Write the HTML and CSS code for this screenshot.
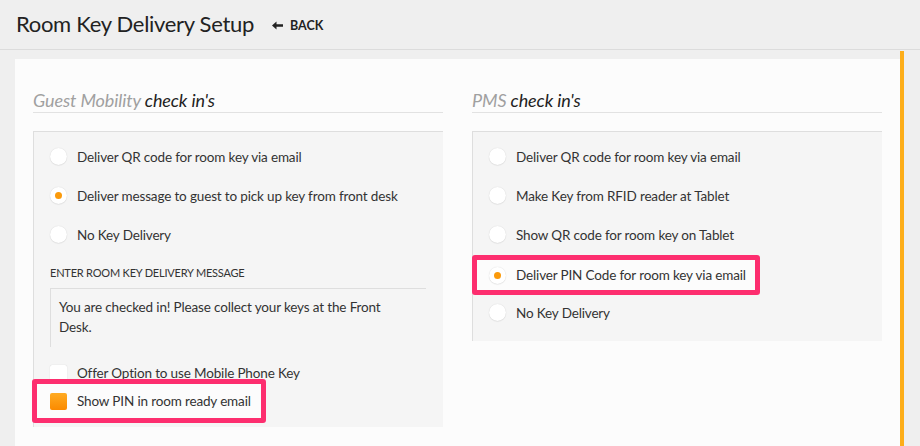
FILE: index.html
```html
<!DOCTYPE html>
<html>
<head>
<meta charset="utf-8">
<link rel="stylesheet" href="styles.css">
</head>
<body>
<header class="topbar">
  <h1 class="page-title">Room Key Delivery Setup</h1>
  <a class="back-link" href="#"><svg class="back-arrow" width="11" height="9" viewBox="0 0 11 9"><path d="M0 4.5 L4.5 0.5 L4.5 3.3 L11 3.3 L11 5.7 L4.5 5.7 L4.5 8.5 Z" fill="#222"/></svg>BACK</a>
</header>
<div class="main">
  <section class="panel">
    <div class="column">
      <h2 class="section-title"><span class="muted">Guest Mobility</span> check in's</h2>
      <div class="option-box box-left">
        <div class="row"><span class="radio"></span><span class="label">Deliver QR code for room key via email</span></div>
        <div class="row"><span class="radio checked"></span><span class="label">Deliver message to guest to pick up key from front desk</span></div>
        <div class="row"><span class="radio"></span><span class="label">No Key Delivery</span></div>
        <div class="field-label">ENTER ROOM KEY DELIVERY MESSAGE</div>
        <div class="message">You are checked in! Please collect your keys at the Front Desk.</div>
        <div class="check-row"><span class="checkbox"></span><span class="label">Offer Option to use Mobile Phone Key</span></div>
        <div class="check-row highlight hl-check"><span class="checkbox checked"></span><span class="label">Show PIN in room ready email</span></div>
      </div>
    </div>
    <div class="column">
      <h2 class="section-title"><span class="muted">PMS</span> check in's</h2>
      <div class="option-box box-right">
        <div class="row"><span class="radio"></span><span class="label">Deliver QR code for room key via email</span></div>
        <div class="row"><span class="radio"></span><span class="label">Make Key from RFID reader at Tablet</span></div>
        <div class="row"><span class="radio"></span><span class="label">Show QR code for room key on Tablet</span></div>
        <div class="row highlight hl-radio"><span class="radio checked"></span><span class="label">Deliver PIN Code for room key via email</span></div>
        <div class="row"><span class="radio"></span><span class="label">No Key Delivery</span></div>
      </div>
    </div>
  </section>
  <div class="accent-bar"></div>
</div>
</body>
</html>
```
FILE: styles.css
```css
html, body {
  margin: 0;
  padding: 0;
}
body {
  width: 920px;
  height: 446px;
  overflow: hidden;
  background: #efefef;
  font-family: Lato, "Open Sans", sans-serif;
  color: #333;
}
.topbar {
  height: 50px;
  box-sizing: border-box;
  border-bottom: 1px solid #dcdcdc;
  display: flex;
  align-items: center;
  padding: 0 0 2px 16px;
}
.page-title {
  margin: 0;
  font-weight: 400;
  font-size: 22px;
  letter-spacing: -0.3px;
  color: #222;
}
.back-link {
  margin: 3px 0 0 18px;
  font-size: 12.5px;
  font-weight: 700;
  color: #222;
  text-decoration: none;
  display: flex;
  align-items: center;
  gap: 7px;
}
.back-arrow {
  display: block;
  margin-top: 1px;
}
.main {
  display: flex;
  height: 396px;
}
.panel {
  flex: 1;
  margin: 9px 0 0 15px;
  background: #fcfcfc;
  display: flex;
  gap: 29px;
  padding: 0 18px;
}
.accent-bar {
  width: 4px;
  margin-right: 16px;
  margin-top: 1px;
  background: #fdae1a;
}
.column {
  width: 410px;
}
.section-title {
  margin: 0;
  padding-top: 30px;
  height: 23px;
  line-height: 23px;
  font-size: 18px;
  font-weight: 400;
  font-style: italic;
  letter-spacing: -0.1px;
  color: #222;
  border-bottom: 1px solid #e2e2e2;
}
.muted {
  color: #a0a0a0;
}
.option-box {
  margin-top: 18px;
  background: #f5f5f5;
  border-top: 1px solid #dedede;
  border-left: 1px solid #dedede;
  padding: 5px 0 9px 0;
}
.box-left {
  padding-bottom: 4px;
}
.row {
  height: 39px;
  box-sizing: border-box;
  display: flex;
  align-items: center;
  padding-left: 16px;
  font-size: 13.5px;
  letter-spacing: -0.15px;
}
.radio {
  width: 17px;
  height: 17px;
  border-radius: 50%;
  background: #fff;
  box-shadow: 0 0 1px rgba(0,0,0,0.18), 0 1px 1px rgba(0,0,0,0.05);
  margin-right: 10px;
  flex: none;
  display: flex;
  align-items: center;
  justify-content: center;
}
.radio.checked::after {
  content: "";
  width: 7px;
  height: 7px;
  border-radius: 50%;
  background: #fb9a0b;
}
.field-label {
  margin: 10px 0 6px 16px;
  line-height: 18px;
  font-size: 11px;
  letter-spacing: -0.2px;
  color: #333;
}
.message {
  margin: 0 17px 0 16px;
  height: 59px;
  box-sizing: border-box;
  border-top: 1px solid #dedede;
  border-left: 1px solid #dedede;
  padding: 8px 40px 0 8px;
  font-size: 13.5px;
  letter-spacing: -0.15px;
  line-height: 20px;
}
.check-row {
  height: 26px;
  box-sizing: border-box;
  display: flex;
  align-items: center;
  padding-left: 16px;
  margin-top: 13px;
  font-size: 13.5px;
  letter-spacing: -0.15px;
}
.checkbox {
  width: 17px;
  height: 17px;
  background: #fff;
  border-radius: 2px;
  box-shadow: 0 0 1px rgba(0,0,0,0.2);
  margin-right: 10px;
  flex: none;
}
.checkbox.checked {
  background: linear-gradient(#ffab22, #fb8a00);
  box-shadow: none;
}
.highlight {
  border: 5px solid #fd2e6f;
  border-radius: 3px;
  background: #fcfcfc;
  width: fit-content;
  position: relative;
}
.hl-check {
  margin: -7px 0 0 -2px;
  height: 44px;
  padding: 0 10px 0 13px;
}
.hl-radio {
  height: 40px;
  margin: 1px 0 -2px -1px;
  padding: 0 9px 0 12px;
}
```
